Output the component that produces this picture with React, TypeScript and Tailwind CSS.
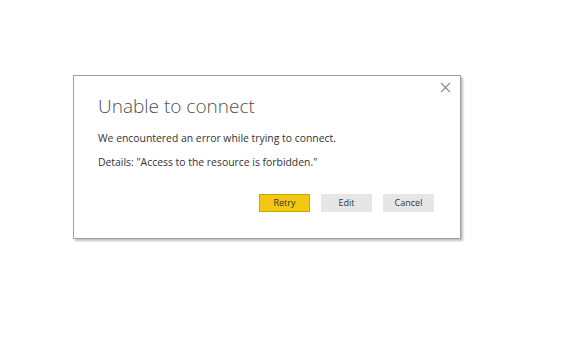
import React from 'react';

export default function App() {
  return (
    <div className="min-h-[348px] w-[561px] bg-white pl-[73px] pt-[75px] font-['Open_Sans',sans-serif]">
      <div className="relative h-[164px] w-[388px] border border-[#a0a0a0] bg-white pl-[24px] pt-[17px] shadow-[2px_2px_2px_rgba(0,0,0,0.25)]">
        <button className="absolute right-[9px] top-[6px] text-[#8a8a8a]">
          <svg width="11" height="11" viewBox="0 0 11 11" fill="none" stroke="currentColor" strokeWidth="1.1">
            <path d="M1 1l9 9M10 1l-9 9" />
          </svg>
        </button>
        <h1 className="text-[19px] font-light leading-[26px] text-[#505050]">Unable to connect</h1>
        <p className="mt-[12px] text-[10.4px] leading-[15px] text-[#333]">
          We encountered an error while trying to connect.
        </p>
        <p className="mt-[9px] text-[10.4px] leading-[15px] text-[#333]">
          Details: "Access to the resource is forbidden."
        </p>
        <div className="mt-[24px] flex justify-end gap-[11px] pr-[26px]">
          <button className="h-[18px] w-[51px] border border-[#c9a800] bg-[#f2c811] text-[9px] text-[#333]">
            Retry
          </button>
          <button className="h-[18px] w-[51px] bg-[#e6e6e6] text-[9px] text-[#333]">Edit</button>
          <button className="h-[18px] w-[51px] bg-[#e6e6e6] text-[9px] text-[#333]">Cancel</button>
        </div>
      </div>
    </div>
  );
}
